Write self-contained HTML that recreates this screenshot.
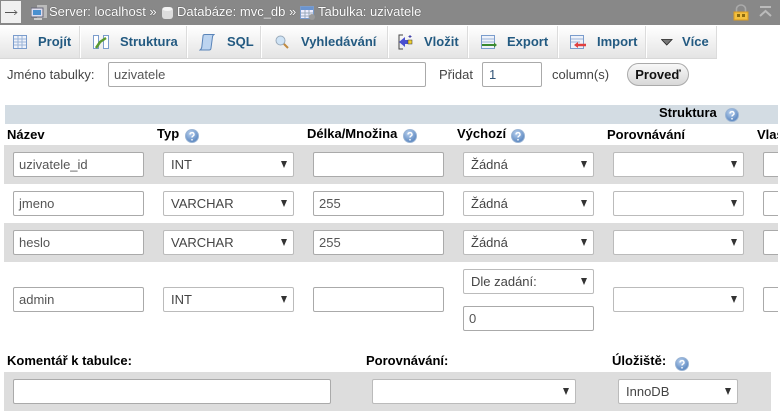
<!DOCTYPE html>
<html><head><meta charset="utf-8"><style>
html,body{margin:0;padding:0;width:780px;height:412px;overflow:hidden;background:#fff}
body{position:relative;font-family:"Liberation Sans",Arial,sans-serif;font-size:13px;color:#444}
.a,.i,.s,.t,.l,.b,.sep{position:absolute}
.t{white-space:nowrap;line-height:16px}
.l{white-space:nowrap;font-weight:bold;color:#000;line-height:16px;font-size:13px}
.b{background:#ddd}
.i,.s{box-sizing:border-box;height:25px;background:#fff;border:1px solid #aaa;border-radius:2px;font-size:13px;line-height:23px;padding-left:5px;color:#555;white-space:nowrap;overflow:hidden}
.s{border-color:#bbb;padding-left:7px;color:#444}
.s:after{content:"";position:absolute;right:6px;top:8px;border-left:3px solid transparent;border-right:3px solid transparent;border-top:7px solid #333}
.sep{top:26px;width:1px;height:32px;background:#fff;box-shadow:-1px 0 0 #dcdcdc}
.tab{position:absolute;top:34px;font-weight:bold;font-size:13px;color:#235a81;line-height:16px;white-space:nowrap}
.h{position:absolute}
</style></head><body>
<div class="a" style="left:0;top:0;width:780px;height:25px;background:#888"></div>
<div class="a" style="left:1px;top:1px;width:20px;height:22px;background:#f0f0f0"></div>
<div class="a" style="left:5px;top:12px;width:12px;height:1px;background:#555"></div>
<svg class="a" style="left:14px;top:10px" width="4" height="5"><path d="M0 0L3 2.500L0 5" fill="none" stroke="#666" stroke-width=".8"/></svg>
<svg class="a" style="left:31px;top:5px" width="17" height="16"><rect x="6" y="0" width="10" height="13" fill="#bbb"/><rect x="0" y="3" width="12" height="9" fill="#dde" stroke="#667"/><rect x="2" y="5" width="8" height="5" fill="#4a90d0"/><rect x="3" y="13" width="8" height="2" fill="#ccc"/></svg>
<div class="t" style="left:49px;top:4px;color:#fff;text-shadow:0 0 1px #333">Server: localhost »</div>
<svg class="a" style="left:162px;top:6px" width="11" height="14"><rect x="0" y="1" width="11" height="12" rx="3" fill="#ddd"/><ellipse cx="5.500" cy="3" rx="5" ry="2" fill="#f4f4f4"/></svg>
<div class="t" style="left:177px;top:4px;color:#fff;text-shadow:0 0 1px #333">Databáze: mvc_db »</div>
<svg class="a" style="left:300px;top:6px" width="16" height="15"><rect x=".5" y=".5" width="13" height="12" fill="#eef" stroke="#7a9ccc"/><rect x="1" y="1" width="12" height="3" fill="#6a94d0"/><path d="M1 7H13M1 10H13M5 4V12M9 4V12" stroke="#9ab"/><circle cx="12" cy="11" r="3" fill="#999"/></svg>
<div class="t" style="left:318px;top:4px;color:#fff;text-shadow:0 0 1px #333">Tabulka: uzivatele</div>
<svg class="a" style="left:733px;top:4px" width="16" height="17"><path d="M3.500 8V5a4.500 4 0 0 1 9 0V8" fill="none" stroke="#aaa" stroke-width="1.600"/><rect x="1" y="8" width="14" height="8" fill="#f2c040" stroke="#d89a20"/><rect x="4" y="10" width="3" height="3" fill="#8a6a10"/><rect x="9" y="10" width="3" height="3" fill="#8a6a10"/></svg>
<svg class="a" style="left:759px;top:6px" width="13" height="12"><path d="M1 1H12" stroke="#bbb" stroke-width="2"/><path d="M1 10L6.500 5L12 10" fill="none" stroke="#bbb" stroke-width="2"/></svg>

<div class="a" style="left:0;top:26px;width:717px;height:32px;background:linear-gradient(#fff,#e4e4e4)"></div>
<div class="a" style="left:717px;top:26px;width:63px;height:33px;background:#fff"></div>
<div class="a" style="left:0;top:58px;width:717px;height:1px;background:#d8d8d8"></div>
<div class="sep" style="left:80px"></div><div class="sep" style="left:187px"></div><div class="sep" style="left:261px"></div><div class="sep" style="left:388px"></div><div class="sep" style="left:468px"></div><div class="sep" style="left:558px"></div><div class="sep" style="left:646px"></div><div class="sep" style="left:717px"></div>

<svg class="h" style="left:13px;top:35px" width="14" height="14"><rect x=".5" y=".5" width="13" height="13" fill="#eef2fa" stroke="#7a9ccc"/><path d="M1 4H13M1 7H13M1 10H13M5 1V13M9 1V13" stroke="#9cb4d8"/></svg>
<div class="tab" style="left:38px">Projít</div>
<svg class="h" style="left:93px;top:35px" width="16" height="15"><rect x=".5" y=".5" width="5" height="13" fill="#fff" stroke="#7a9ccc"/><rect x="10.500" y=".5" width="5" height="13" fill="#fff" stroke="#7a9ccc"/><path d="M3 13L7 7L13 3" stroke="#5a9a30" stroke-width="2.500" fill="none"/></svg>
<div class="tab" style="left:120px">Struktura</div>
<svg class="h" style="left:199px;top:34px" width="16" height="17"><path d="M4 2Q4 .5 6 .5H15Q13.500 1.500 13.500 3L12 14Q12 16 10 16H1Q2.500 15 2.800 13Z" fill="#bcd4f0" stroke="#5a84b8"/></svg>
<div class="tab" style="left:227px">SQL</div>
<svg class="h" style="left:275px;top:35px" width="14" height="14"><path d="M8 8L13 13" stroke="#c08a40" stroke-width="2"/><circle cx="5.500" cy="5.500" r="4.500" fill="#cfe3f5" stroke="#9ab"/></svg>
<div class="tab" style="left:301px">Vyhledávání</div>
<svg class="h" style="left:398px;top:34px" width="16" height="16"><path d="M5 1H1V15H5" fill="none" stroke="#444"/><path d="M1 8L7 3V6H11V10H7V13Z" fill="#4a50d0"/><rect x="10" y="6" width="4" height="4" fill="#f0d030" stroke="#333" stroke-width=".5"/><path d="M12 1V4M10.500 2.500H13.500" stroke="#44a"/></svg>
<div class="tab" style="left:424px">Vložit</div>
<svg class="h" style="left:481px;top:35px" width="17" height="15"><rect x=".5" y=".5" width="13" height="13" fill="#eef2fa" stroke="#7a9ccc"/><path d="M1 4H13M1 7H13" stroke="#9cb4d8"/><path d="M1 10H13" stroke="#3a8a30" stroke-width="2"/><path d="M13 7.500L16 10L13 12.500Z" fill="#3a8a30"/></svg>
<div class="tab" style="left:507px">Export</div>
<svg class="h" style="left:570px;top:35px" width="17" height="15"><rect x=".5" y=".5" width="13" height="13" fill="#eef2fa" stroke="#7a9ccc"/><path d="M1 4H13M1 7H10" stroke="#9cb4d8"/><path d="M8 10H16" stroke="#e04040" stroke-width="2.500"/><path d="M8 7L4 10L8 13Z" fill="#e04040"/></svg>
<div class="tab" style="left:597px">Import</div>
<svg class="h" style="left:661px;top:39px" width="12" height="7"><path d="M.5 .5H11L5.750 6Z" fill="#777" stroke="#222" stroke-width=".8"/></svg>
<div class="tab" style="left:682px">Více</div>

<div class="t" style="left:7px;top:67px">Jméno tabulky:</div>
<div class="i" style="left:108px;top:62px;width:318px">uzivatele</div>
<div class="t" style="left:439px;top:67px">Přidat</div>
<div class="i" style="left:482px;top:62px;width:60px;padding-left:6px;color:#357">1</div>
<div class="t" style="left:552px;top:67px">column(s)</div>
<div class="a" style="left:627px;top:63px;width:62px;height:23px;box-sizing:border-box;border:1px solid #aaa;border-radius:12px;background:linear-gradient(#f8f8f8,#d8d8d8);text-align:center;font-weight:bold;font-size:13px;line-height:21px;color:#111">Proveď</div>

<div class="a" style="left:5px;top:105px;width:773px;height:19px;background:#d3dce3"></div>
<div class="l" style="left:659px;top:105px">Struktura</div>
<svg width="0" height="0" style="position:absolute"><defs><radialGradient id="g" cx=".4" cy=".3" r=".8"><stop offset="0" stop-color="#b8d0ee"/><stop offset="1" stop-color="#4a7ab8"/></radialGradient><symbol id="q" viewBox="0 0 14 14"><circle cx="7" cy="7" r="6.500" fill="url(#g)" stroke="#9ab4d4"/><path d="M5 5.500a2 1.800 0 1 1 3 1.500q-1 .5-1 1.500M7 10V11.500" fill="none" stroke="#fff" stroke-width="1.400"/></symbol></defs></svg>
<svg class="h" style="left:725px;top:108px" width="14" height="14"><use href="#q"/></svg>

<div class="l" style="left:7px;top:127px">Název</div>
<div class="l" style="left:157px;top:126px">Typ</div><svg class="h" style="left:185px;top:129px" width="14" height="14"><use href="#q"/></svg>
<div class="l" style="left:307px;top:126px">Délka/Množina</div><svg class="h" style="left:403px;top:129px" width="14" height="14"><use href="#q"/></svg>
<div class="l" style="left:457px;top:126px">Výchozí</div><svg class="h" style="left:511px;top:129px" width="14" height="14"><use href="#q"/></svg>
<div class="l" style="left:607px;top:127px">Porovnávání</div>
<div class="l" style="left:757px;top:127px">Vlas</div>

<div class="b" style="left:4px;top:145px;width:774px;height:39px"></div>
<div class="b" style="left:4px;top:223px;width:774px;height:39px"></div>

<div class="i" style="left:13px;top:152px;width:131px">uzivatele_id</div>
<div class="s" style="left:163px;top:152px;width:131px">INT</div>
<div class="i" style="left:313px;top:152px;width:131px"></div>
<div class="s" style="left:463px;top:152px;width:131px">Žádná</div>
<div class="s" style="left:613px;top:152px;width:131px"></div>
<div class="i" style="left:763px;top:152px;width:30px"></div>

<div class="i" style="left:13px;top:191px;width:131px">jmeno</div>
<div class="s" style="left:163px;top:191px;width:131px">VARCHAR</div>
<div class="i" style="left:313px;top:191px;width:131px">255</div>
<div class="s" style="left:463px;top:191px;width:131px">Žádná</div>
<div class="s" style="left:613px;top:191px;width:131px"></div>
<div class="i" style="left:763px;top:191px;width:30px"></div>

<div class="i" style="left:13px;top:230px;width:131px">heslo</div>
<div class="s" style="left:163px;top:230px;width:131px">VARCHAR</div>
<div class="i" style="left:313px;top:230px;width:131px">255</div>
<div class="s" style="left:463px;top:230px;width:131px">Žádná</div>
<div class="s" style="left:613px;top:230px;width:131px"></div>
<div class="i" style="left:763px;top:230px;width:30px"></div>

<div class="i" style="left:13px;top:287px;width:131px">admin</div>
<div class="s" style="left:163px;top:287px;width:131px">INT</div>
<div class="i" style="left:313px;top:287px;width:131px"></div>
<div class="s" style="left:463px;top:269px;width:131px">Dle zadání:</div>
<div class="i" style="left:463px;top:306px;width:131px">0</div>
<div class="s" style="left:613px;top:287px;width:131px"></div>
<div class="i" style="left:763px;top:287px;width:30px"></div>
<div class="a" style="left:778px;top:100px;width:2px;height:312px;background:#fff"></div>

<div class="l" style="left:7px;top:353px">Komentář k tabulce:</div>
<div class="l" style="left:366px;top:353px">Porovnávání:</div>
<div class="l" style="left:612px;top:353px">Úložiště:</div><svg class="h" style="left:675px;top:357px" width="14" height="14"><use href="#q"/></svg>
<div class="b" style="left:4px;top:372px;width:767px;height:39px"></div>
<div class="i" style="left:13px;top:379px;width:318px"></div>
<div class="s" style="left:372px;top:379px;width:204px"></div>
<div class="s" style="left:618px;top:379px;width:120px">InnoDB</div>
</body></html>
